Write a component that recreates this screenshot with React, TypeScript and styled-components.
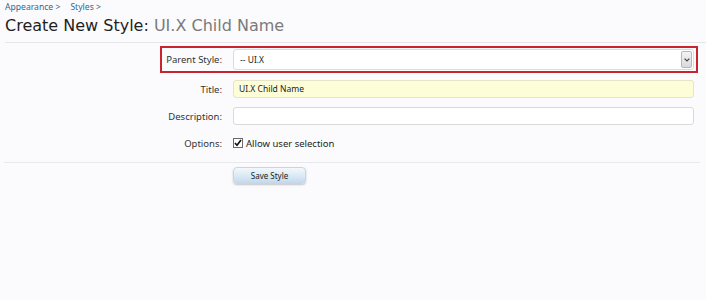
import React from "react";
import styled, { createGlobalStyle } from "styled-components";

const Global = createGlobalStyle`
  html, body { margin: 0; padding: 0; background: #fbfbfd; }
  body { font-family: "Noto Sans", "DejaVu Sans", sans-serif; color: #222; }
`;

const Page = styled.div`
  width: 706px;
  height: 300px;
  background: #fbfbfd;
  display: flex;
  flex-direction: column;
`;

const Breadcrumbs = styled.div`
  display: flex;
  gap: 10px;
  padding: 2px 0 0 5px;
  height: 11px;
  font-size: 8.6px;
  line-height: 11px;
`;

const Crumb = styled.a`
  color: #2d6a93;
  text-decoration: none;
`;

const Heading = styled.h1`
  margin: 0 0 0 5px;
  padding: 3px 0 6px;
  font-family: "DejaVu Sans", sans-serif;
  font-weight: normal;
  font-size: 16px;
  line-height: 20px;
  color: #1f1f1f;
  border-bottom: 1px solid #e6e6ea;
`;

const Sub = styled.span`
  color: #7a7a7a;
`;

const Form = styled.div`
  display: flex;
  flex-direction: column;
  padding-top: 3px;
`;

const Row = styled.div<{ $highlight?: boolean; $top?: number }>`
  display: grid;
  grid-template-columns: 60px 1fr;
  column-gap: 11px;
  align-items: center;
  margin: ${(p) => p.$top ?? 0}px 8px 0 160px;
  border: ${(p) => (p.$highlight ? "2px solid #c9232f" : "0 solid transparent")};
  border-left-width: 2px;
  border-right-width: 2px;
  padding: ${(p) => (p.$highlight ? "1px 2px 1px 0" : "0 2px 0 0")};
`;

const Label = styled.label`
  text-align: right;
  font-size: 9.5px;
  color: #333;
  white-space: nowrap;
`;

const Select = styled.div`
  height: 21px;
  box-sizing: border-box;
  border: 1px solid #dcdcdc;
  border-radius: 3px;
  background: #fff;
  display: flex;
  align-items: center;
  justify-content: space-between;
  padding: 0 1px 0 6px;
  font-size: 8.5px;
  color: #222;
`;

const SelectArrow = styled.span`
  width: 11px;
  height: 17px;
  box-sizing: border-box;
  border: 1px solid #b8b8b8;
  border-radius: 2px;
  background: linear-gradient(#f4f4f4, #dadada);
  display: flex;
  align-items: center;
  justify-content: center;
`;

const TextInput = styled.div<{ $filled?: boolean }>`
  height: 18px;
  box-sizing: border-box;
  border: 1px solid ${(p) => (p.$filled ? "#e4e4c8" : "#dadada")};
  border-radius: 3px;
  background: ${(p) => (p.$filled ? "#fdfdd8" : "#fff")};
  padding: 0 5px;
  font-size: 8.5px;
  line-height: 16px;
  color: #222;
`;

const CheckLine = styled.div`
  display: flex;
  align-items: center;
  gap: 3px;
  font-size: 9.5px;
  color: #222;
  height: 14px;
`;

const Box = styled.span`
  width: 10px;
  height: 10px;
  box-sizing: border-box;
  border: 1px solid #6b6b6b;
  background: #fff;
  display: flex;
  align-items: center;
  justify-content: center;
`;

const Divider = styled.div`
  margin: 12px 6px 0 4px;
  border-top: 1px solid #e8e8ee;
`;

const Actions = styled.div`
  display: flex;
  padding: 4px 0 0 233px;
`;

const Button = styled.button`
  width: 73px;
  height: 17px;
  border: 1px solid #c6d6e4;
  border-radius: 4px;
  background: linear-gradient(#f3f8fc, #d9e8f4 55%, #c3d9ec);
  box-shadow: 0 1px 2px rgba(0, 0, 0, 0.22);
  font-family: "Noto Sans", sans-serif;
  font-size: 8px;
  line-height: 15px;
  color: #222;
  padding: 0;
  cursor: pointer;
`;

export default function App() {
  return (
    <>
      <Global />
      <Page>
        <Breadcrumbs>
          <Crumb>Appearance &gt;</Crumb>
          <Crumb>Styles &gt;</Crumb>
        </Breadcrumbs>
        <Heading>
          Create New Style: <Sub>UI.X Child Name</Sub>
        </Heading>
        <Form>
          <Row $highlight>
            <Label>Parent Style:</Label>
            <Select>
              <span>-- UI.X</span>
              <SelectArrow>
                <svg width="6" height="4" viewBox="0 0 6 4">
                  <path d="M0.6 0.6 L3 3 L5.4 0.6" fill="none" stroke="#444" strokeWidth="1.2" />
                </svg>
              </SelectArrow>
            </Select>
          </Row>
          <Row $top={7}>
            <Label>Title:</Label>
            <TextInput $filled>UI.X Child Name</TextInput>
          </Row>
          <Row $top={9}>
            <Label>Description:</Label>
            <TextInput />
          </Row>
          <Row $top={11}>
            <Label>Options:</Label>
            <CheckLine>
              <Box>
                <svg width="8" height="8" viewBox="0 0 8 8">
                  <path d="M1 4 L3 6.3 L7 1" fill="none" stroke="#111" strokeWidth="1.6" />
                </svg>
              </Box>
              Allow user selection
            </CheckLine>
          </Row>
        </Form>
        <Divider />
        <Actions>
          <Button>Save Style</Button>
        </Actions>
      </Page>
    </>
  );
}
